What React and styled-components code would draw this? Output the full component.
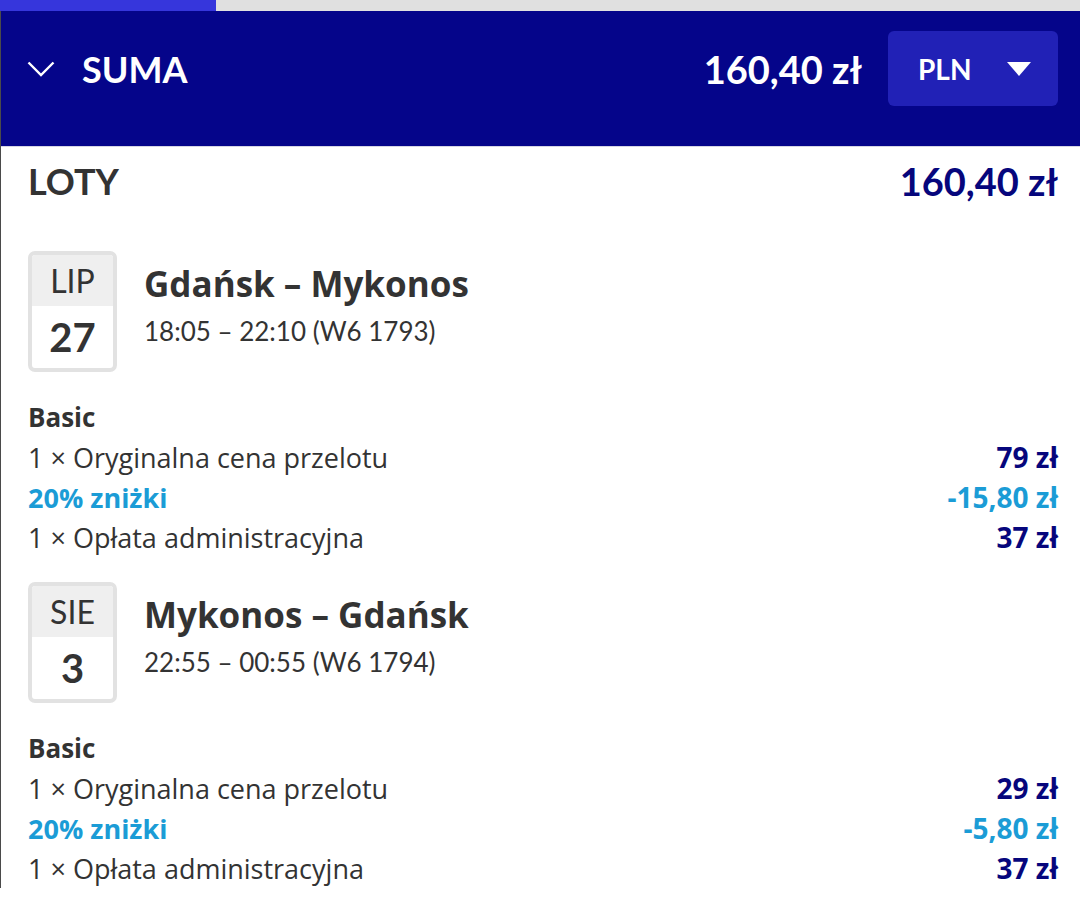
import React from "react";
import styled, { createGlobalStyle } from "styled-components";

const GlobalStyle = createGlobalStyle`
  html, body {
    margin: 0;
    padding: 0;
    background: #fff;
  }
  body {
    font-family: Lato, "Open Sans", sans-serif;
    color: #333;
  }
`;

const textFont = `"Open Sans", Lato, sans-serif`;

const flights = [
  {
    month: "LIP",
    day: "27",
    route: "Gdańsk – Mykonos",
    time: "18:05 – 22:10 (W6 1793)",
    fare: "Basic",
    lines: [
      { label: "1 × Oryginalna cena przelotu", price: "79 zł" },
      { label: "20% zniżki", price: "-15,80 zł", discount: true },
      { label: "1 × Opłata administracyjna", price: "37 zł" },
    ],
  },
  {
    month: "SIE",
    day: "3",
    route: "Mykonos – Gdańsk",
    time: "22:55 – 00:55 (W6 1794)",
    fare: "Basic",
    lines: [
      { label: "1 × Oryginalna cena przelotu", price: "29 zł" },
      { label: "20% zniżki", price: "-5,80 zł", discount: true },
      { label: "1 × Opłata administracyjna", price: "37 zł" },
    ],
  },
];

export default function App() {
  return (
    <>
      <GlobalStyle />
      <Progress>
        <ProgressFill />
      </Progress>
      <Panel>
        <SummaryBar>
          <Toggle>
            <svg width="28" height="16" viewBox="0 0 28 16" fill="none">
              <path d="M1.5 1.5 L14 14 L26.5 1.5" stroke="#fff" strokeWidth="2.4" />
            </svg>
            <BarTitle>SUMA</BarTitle>
          </Toggle>
          <BarRight>
            <BarTotal>160,40 zł</BarTotal>
            <CurrencyButton>
              PLN
              <svg width="24" height="14" viewBox="0 0 24 14">
                <path d="M0 0 H24 L12 14 Z" fill="#fff" />
              </svg>
            </CurrencyButton>
          </BarRight>
        </SummaryBar>

        <Body>
          <SectionHead>
            <SectionTitle>LOTY</SectionTitle>
            <SectionTotal>160,40 zł</SectionTotal>
          </SectionHead>

          {flights.map((f) => (
            <Flight key={f.route}>
              <FlightHead>
                <DateBox>
                  <Month>{f.month}</Month>
                  <Day>{f.day}</Day>
                </DateBox>
                <FlightInfo>
                  <Route>{f.route}</Route>
                  <Time>{f.time}</Time>
                </FlightInfo>
              </FlightHead>
              <Fare>
                <FareName>{f.fare}</FareName>
                {f.lines.map((l) => (
                  <PriceRow key={l.label} $discount={l.discount}>
                    <span>{l.label}</span>
                    <Amount $discount={l.discount}>{l.price}</Amount>
                  </PriceRow>
                ))}
              </Fare>
            </Flight>
          ))}
        </Body>
      </Panel>
    </>
  );
}

const Progress = styled.div`
  height: 11px;
  background: #e0e0e0;
`;

const ProgressFill = styled.div`
  width: 216px;
  height: 100%;
  background: #3636dc;
`;

const Panel = styled.div`
  border-left: 1px solid #4a4a4a;
`;

const SummaryBar = styled.div`
  display: flex;
  align-items: center;
  justify-content: space-between;
  box-sizing: border-box;
  height: 136px;
  padding: 20px 22px 40px 26px;
  background: #05058a;
  border-bottom: 1px solid #d6d6e4;
  color: #fff;
`;

const Toggle = styled.div`
  display: flex;
  align-items: center;
  gap: 27px;
`;

const BarTitle = styled.div`
  font-size: 36px;
  font-weight: 700;
`;

const BarRight = styled.div`
  display: flex;
  align-items: center;
  gap: 26px;
`;

const BarTotal = styled.div`
  font-size: 38px;
  font-weight: 700;
`;

const CurrencyButton = styled.div`
  display: flex;
  align-items: center;
  justify-content: space-between;
  box-sizing: border-box;
  width: 170px;
  height: 75px;
  padding: 0 27px 0 30px;
  border-radius: 6px;
  background: #2121b6;
  font-size: 28px;
  font-weight: 700;
`;

const Body = styled.div`
  padding: 14px 22px 0 27px;
`;

const SectionHead = styled.div`
  display: flex;
  justify-content: space-between;
  align-items: center;
  height: 40px;
  margin-bottom: 50px;
`;

const SectionTitle = styled.div`
  font-size: 36px;
  font-weight: 700;
  color: #333;
`;

const SectionTotal = styled.div`
  font-size: 38px;
  font-weight: 700;
  color: #06067c;
`;

const Flight = styled.div`
  margin-bottom: 25px;
`;

const FlightHead = styled.div`
  display: flex;
  gap: 27px;
  margin-bottom: 25px;
`;

const DateBox = styled.div`
  display: flex;
  flex-direction: column;
  box-sizing: border-box;
  width: 89px;
  height: 121px;
  border: 4px solid #e2e2e2;
  border-radius: 7px;
  overflow: hidden;
`;

const Month = styled.div`
  height: 51px;
  display: flex;
  align-items: center;
  justify-content: center;
  background: #efefef;
  font-size: 32px;
  color: #333;
`;

const Day = styled.div`
  flex: 1;
  display: flex;
  align-items: center;
  justify-content: center;
  font-size: 40px;
  font-weight: 700;
  color: #333;
`;

const FlightInfo = styled.div`
  padding-top: 10px;
`;

const Route = styled.div`
  font-family: ${textFont};
  font-size: 35px;
  font-weight: 700;
  line-height: 46px;
  color: #333;
`;

const Time = styled.div`
  font-size: 26px;
  line-height: 48px;
  color: #333;
`;

const Fare = styled.div`
  display: flex;
  flex-direction: column;
  font-family: ${textFont};
`;

const FareName = styled.div`
  font-size: 26px;
  font-weight: 700;
  line-height: 40px;
`;

const PriceRow = styled.div`
  display: flex;
  justify-content: space-between;
  align-items: center;
  height: 40px;
  font-size: 27px;
  color: ${(p) => (p.$discount ? "#1b9cd6" : "#333")};
  font-weight: ${(p) => (p.$discount ? 700 : 400)};
`;

const Amount = styled.span`
  font-size: 28px;
  font-weight: 700;
  color: ${(p) => (p.$discount ? "#1b9cd6" : "#06067c")};
`;
